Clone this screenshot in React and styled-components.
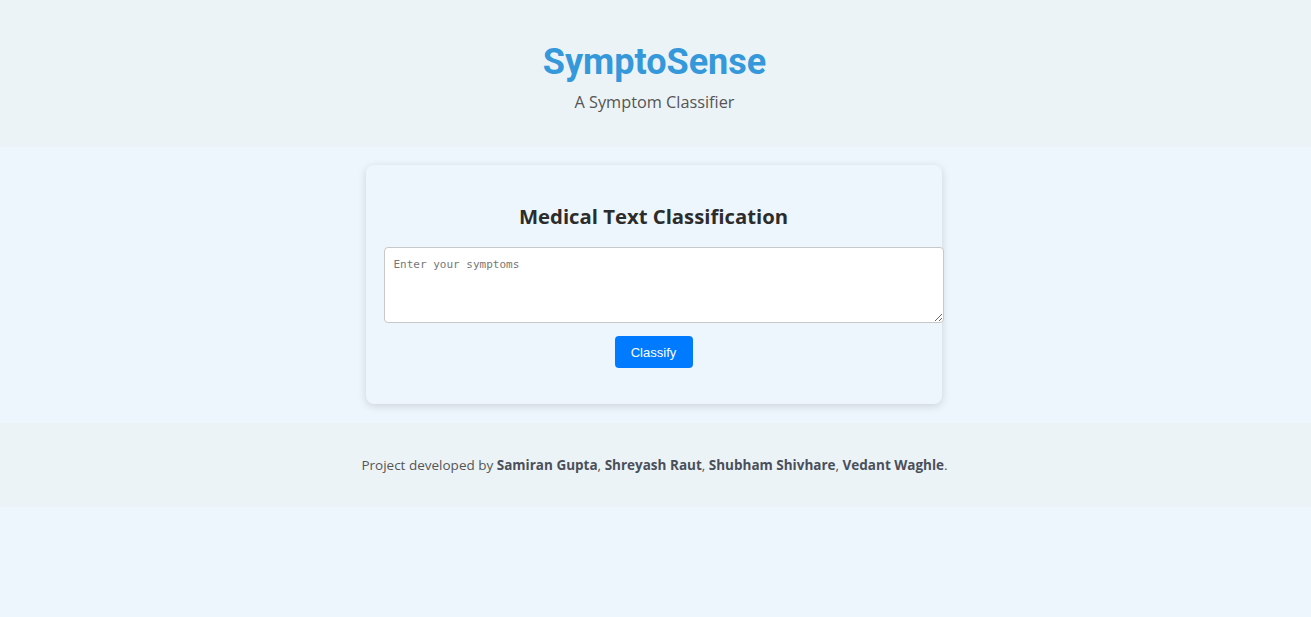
import React from 'react';
import styled, { createGlobalStyle } from 'styled-components';

const GlobalStyle = createGlobalStyle`
  body {
    margin: 0;
    background-color: #eef6fd;
    font-family: 'Open Sans', 'Noto Sans', sans-serif;
  }
`;

const Header = styled.header`
  background-color: #ecf3f7;
  height: 147px;
  display: flex;
  flex-direction: column;
  align-items: center;
  padding: 40px 2px 0 0;
  box-sizing: border-box;
`;

const Title = styled.h1`
  margin: 0;
  font-family: Roboto, sans-serif;
  font-weight: 700;
  font-size: 36px;
  line-height: 44px;
  color: #3498db;
`;

const Subtitle = styled.p`
  margin: 7px 0 0;
  font-size: 16.3px;
  color: #555;
`;

const Main = styled.main`
  display: flex;
  justify-content: center;
  padding: 18px 4px 19px 0;
`;

const Card = styled.section`
  width: 576px;
  box-sizing: border-box;
  padding: 36px 18px 36px;
  background-color: #eef6fd;
  border-radius: 8px;
  box-shadow: 0 2px 8px rgba(0, 0, 0, 0.15);
  display: flex;
  flex-direction: column;
  align-items: center;
`;

const CardTitle = styled.h2`
  margin: 0 0 16px;
  font-size: 20.3px;
  line-height: 30px;
  font-weight: 700;
  color: #2c2c2c;
`;

const Input = styled.textarea`
  align-self: flex-start;
  width: 100%;
  height: 54px;
  padding: 10px 9px;
  border: 1px solid #c8c8c8;
  border-radius: 4px;
  background: #fff;
  font-family: 'DejaVu Sans Mono', monospace;
  font-size: 11px;
  resize: vertical;
  &::placeholder {
    color: #777;
  }
`;

const Button = styled.button`
  margin-top: 13px;
  width: 78px;
  height: 32px;
  border: none;
  border-radius: 4px;
  background-color: #007bff;
  color: #fff;
  font-family: 'Liberation Sans', Arial, sans-serif;
  font-size: 13px;
  cursor: pointer;
`;

const Footer = styled.footer`
  background-color: #ecf3f7;
  height: 84px;
  display: flex;
  align-items: center;
  justify-content: center;
  padding-right: 2px;
  font-size: 13.5px;
  color: #555;
`;

const Name = styled.strong`
  font-weight: 700;
  color: #4a4f5a;
`;

const authors = ['Samiran Gupta', 'Shreyash Raut', 'Shubham Shivhare', 'Vedant Waghle'];

const App = () => (
  <>
    <GlobalStyle />
    <Header>
      <Title>SymptoSense</Title>
      <Subtitle>A Symptom Classifier</Subtitle>
    </Header>
    <Main>
      <Card>
        <CardTitle>Medical Text Classification</CardTitle>
        <Input placeholder="Enter your symptoms" />
        <Button>Classify</Button>
      </Card>
    </Main>
    <Footer>
      <span>
        Project developed by{' '}
        {authors.map((a, i) => (
          <React.Fragment key={a}>
            <Name>{a}</Name>
            {i < authors.length - 1 ? ', ' : '.'}
          </React.Fragment>
        ))}
      </span>
    </Footer>
  </>
);

export default App;
